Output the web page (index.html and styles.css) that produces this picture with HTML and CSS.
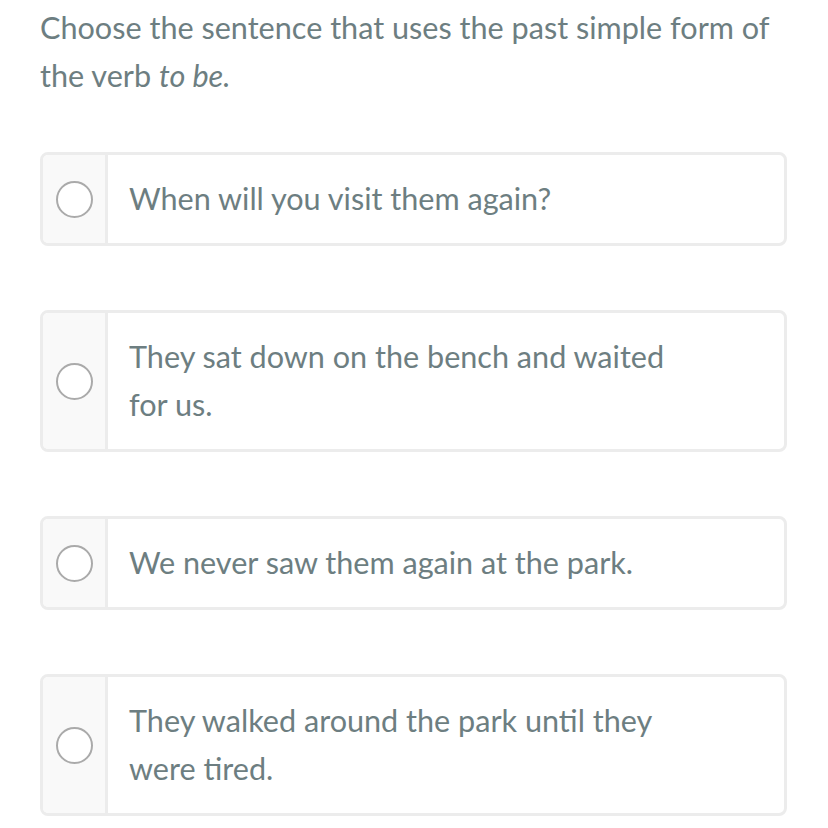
FILE: index.html
```html
<!DOCTYPE html>
<html>
<head>
<meta charset="utf-8">
<link rel="stylesheet" href="styles.css">
</head>
<body>
<div class="page">
  <p class="question">Choose the sentence that uses the past simple form of the verb <em>to be.</em></p>
  <div class="options">
    <div class="option">
      <div class="radio-cell"><span class="radio"></span></div>
      <div class="label">When will you visit them again?</div>
    </div>
    <div class="option">
      <div class="radio-cell"><span class="radio"></span></div>
      <div class="label">They sat down on the bench and waited for us.</div>
    </div>
    <div class="option">
      <div class="radio-cell"><span class="radio"></span></div>
      <div class="label">We never saw them again at the park.</div>
    </div>
    <div class="option">
      <div class="radio-cell"><span class="radio"></span></div>
      <div class="label">They walked around the park until they were tired.</div>
    </div>
  </div>
</div>
</body>
</html>
```
FILE: styles.css
```css
html, body {
  margin: 0;
  padding: 0;
  background: #ffffff;
}
.page {
  padding: 4px 41px 0 40px;
  font-family: Lato, "Open Sans", sans-serif;
  color: #6d7e81;
  font-size: 30.6px;
  line-height: 48px;
}
.question {
  margin: 0 0 52px 0;
}
.question em {
  font-style: italic;
}
.options {
  display: flex;
  flex-direction: column;
  gap: 64px;
}
.option {
  display: flex;
  border: 3px solid #ececec;
  border-radius: 8px;
  overflow: hidden;
}
.radio-cell {
  width: 62px;
  flex: none;
  background: #f9f9f9;
  border-right: 3px solid #ececec;
  display: flex;
  align-items: center;
  justify-content: center;
}
.radio {
  width: 33px;
  height: 33px;
  border: 2px solid #aaaaaa;
  border-radius: 50%;
  background: #ffffff;
}
.label {
  padding: 20px 100px 20px 21px;
  flex: 1;
}
```
